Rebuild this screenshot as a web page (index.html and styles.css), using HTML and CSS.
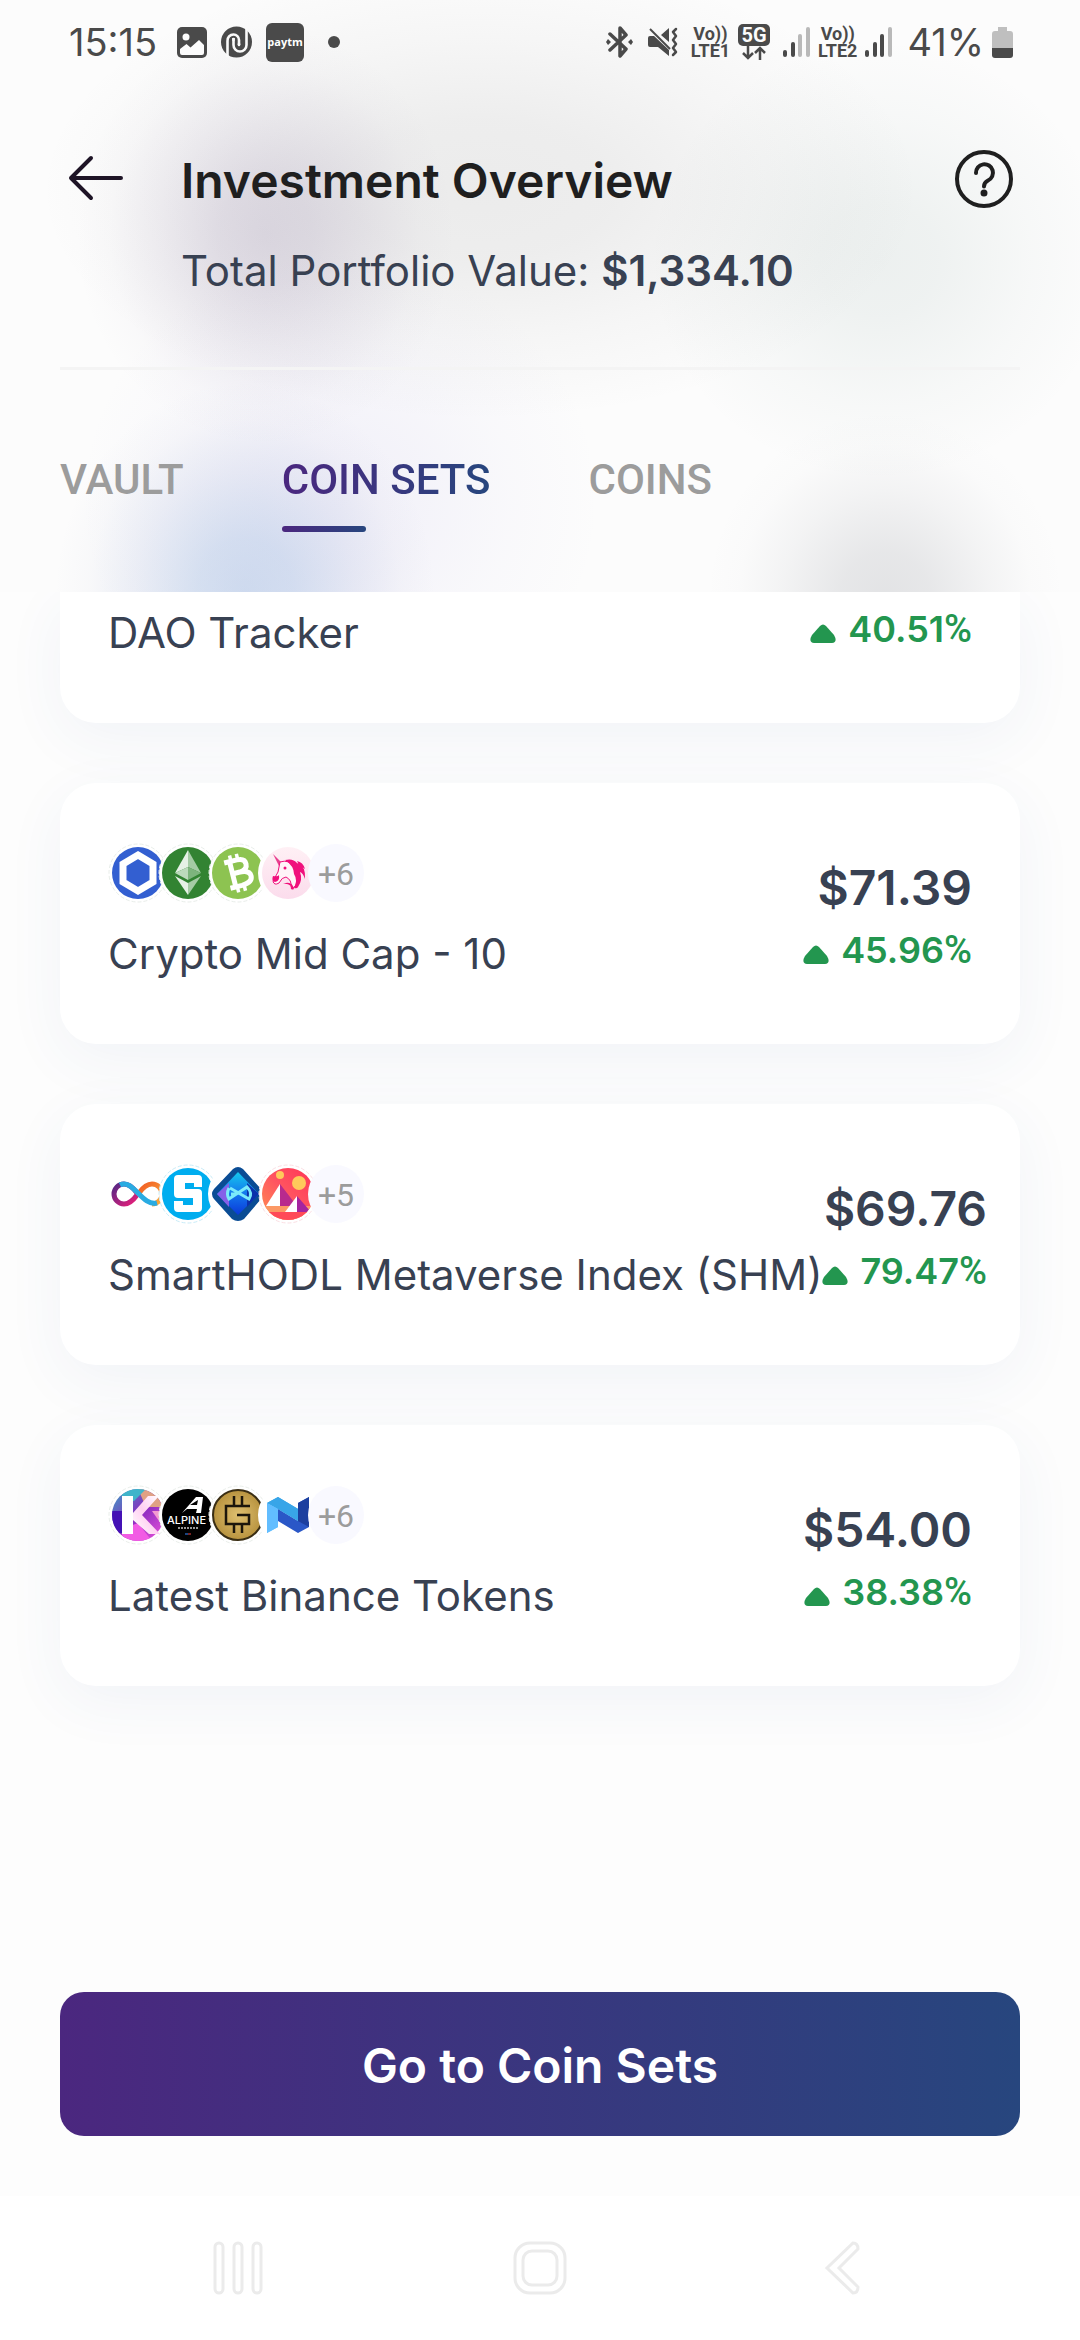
FILE: index.html
```
<!DOCTYPE html>
<html lang="en">
<head>
<meta charset="utf-8">
<meta name="viewport" content="width=device-width, initial-scale=1">
<title>Investment Overview</title>
<link rel="stylesheet" href="styles.css">
</head>
<body>
<svg class="defs" width="0" height="0" aria-hidden="true">
  <defs>
    <symbol id="signal" viewBox="0 0 27 30">
      <rect x="0" y="23" width="4" height="7" rx="2"/>
      <rect x="8" y="15" width="4" height="15" rx="2"/>
    </symbol>
    <symbol id="up" viewBox="0 0 26 19"><path d="M10 2q3-3 6 0l8 9q4 7-2 8H4q-6-1-2-8z" fill="#23964f"/></symbol>
    <linearGradient id="g-k" x1="0" y1="0" x2="1" y2="1"><stop offset="0" stop-color="#2cb4c4"/><stop offset=".5" stop-color="#8a2cc0"/><stop offset="1" stop-color="#ff5ae0"/></linearGradient>
    <linearGradient id="g-leg" x1="1" y1="0" x2="0" y2="1"><stop offset="0" stop-color="#fff"/><stop offset=".5" stop-color="#ffd0f2"/><stop offset="1" stop-color="#fff"/></linearGradient>
    <linearGradient id="g-uni" x1="0" y1="0" x2="0" y2="1"><stop offset="0" stop-color="#fff0f5"/><stop offset="1" stop-color="#fbdcec"/></linearGradient>
    <linearGradient id="g-mana" x1="0" y1="1" x2="1" y2="0"><stop offset="0" stop-color="#ff9a4d"/><stop offset=".5" stop-color="#ff5560"/><stop offset="1" stop-color="#ff2d55"/></linearGradient>
    <linearGradient id="g-axs" x1="0" y1="0" x2="0" y2="1"><stop offset="0" stop-color="#14c8ec"/><stop offset=".5" stop-color="#1478ee"/><stop offset="1" stop-color="#0a38d8"/></linearGradient>
    <linearGradient id="g-icp1" x1="0" y1="0" x2="1" y2="1"><stop offset="0" stop-color="#522785"/><stop offset="1" stop-color="#ed1e79"/></linearGradient>
    <linearGradient id="g-icp2" x1="0" y1="0" x2="1" y2="1"><stop offset="0" stop-color="#f15a24"/><stop offset="1" stop-color="#fbb03b"/></linearGradient>
    <radialGradient id="g-gold"><stop offset="0" stop-color="#dfc070"/><stop offset="1" stop-color="#b8933f"/></radialGradient>
    <clipPath id="disc"><circle cx="30" cy="30" r="26"/></clipPath>
  </defs>
</svg>

<header class="top">
  <div class="status">
    <div class="status-group status-left">
      <span class="clock">15:15</span>
      <svg width="30" height="31" viewBox="0 0 30 31"><rect width="30" height="31" rx="5" fill="#4a4a4a"/><circle cx="9" cy="10" r="3.500" fill="#fcfcfc"/><path d="M3 22l6.500-5 4 3.500L22 13l5 5v8q0 2-2 2H5q-2 0-2-2z" fill="#fcfcfc"/></svg>
      <svg width="31" height="32" viewBox="0 0 31 32"><circle cx="15.500" cy="16" r="15.500" fill="#4a4a4a"/><g fill="none" stroke="#fafafa" stroke-width="2.600"><path d="M6.500 31V15a6 6 0 0 1 6-6.500a5.500 5.500 0 0 1 5.500 5.500v5"/><path d="M12.500 12v7a6.500 6.500 0 0 0 13 0V0"/></g><path d="M12.500 14v-1M18 18v1" stroke="#fafafa" stroke-width="2.600" stroke-linecap="round"/></svg>
      <span class="paytm">paytm</span>
      <i class="dot"></i>
    </div>
    <div class="status-group status-right">
      <svg width="27" height="32" viewBox="0 0 27 32"><path d="M4 8l16 15-6 7V2l6 7L4 24" fill="none" stroke="#4a4a4a" stroke-width="3.500" stroke-linejoin="round" stroke-linecap="round"/><path d="M0 16l2-3 3 3-3 3zM22 16l3-3 2 3-2 3z" fill="#4a4a4a"/></svg>
      <svg class="mute" width="30" height="30" viewBox="0 0 30 30"><path d="M0 11q0-2 2-2h4L21 23v6L10 20H2q-2 0-2-2zM21 1v14L13 8z" fill="#4a4a4a"/><path d="M2 2l20 20" stroke="#4a4a4a" stroke-width="2"/><path d="M28 2l-3 3 3 4-3 4 3 4-3 4 3 4-3 3" fill="none" stroke="#4a4a4a" stroke-width="2.500" stroke-linecap="round" stroke-linejoin="round"/></svg>
      <span class="volte"><span>Vo))</span><span>LTE1</span></span>
      <span class="fiveg"><b>5G</b><svg width="24" height="14" viewBox="0 0 24 14"><path d="M6 0v12M1 7l5 5 5-5M18 14V2M13 7l5-5 5 5" fill="none" stroke="#4a4a4a" stroke-width="2.500"/></svg></span>
      <svg width="27" height="30" viewBox="0 0 27 30" fill="#4a4a4a"><use href="#signal"/><g fill="#b9b9b9"><rect x="15" y="7" width="4" height="23" rx="2"/><rect x="23" y="0" width="4" height="30" rx="2"/></g></svg>
      <span class="volte"><span>Vo))</span><span>LTE2</span></span>
      <svg width="27" height="30" viewBox="0 0 27 30" fill="#4a4a4a"><use href="#signal"/><rect x="15" y="7" width="4" height="23" rx="2"/><rect x="23" y="0" width="4" height="30" rx="2" fill="#b9b9b9"/></svg>
      <span class="clock percent">41%</span>
      <svg width="21" height="31" viewBox="0 0 21 31"><path d="M6 0h9v4h3q3 0 3 3v14H0V7q0-3 3-3h3z" fill="#bfbfbf"/><path d="M0 21h21v7q0 3-3 3H3q-3 0-3-3z" fill="#4a4a4a"/></svg>
    </div>
  </div>

  <div class="heading">
    <button class="icon-button back" aria-label="Back"><svg width="58" height="48" viewBox="0 0 58 48"><path d="M55 24H5M25 4L5 24l20 20" fill="none" stroke="#1e1426" stroke-width="4" stroke-linecap="round" stroke-linejoin="round"/></svg></button>
    <div class="titles">
      <h1>Investment Overview</h1>
      <p>Total Portfolio Value: <strong>$1,334.10</strong></p>
    </div>
    <button class="icon-button" aria-label="Help"><svg width="60" height="60" viewBox="0 0 60 60" fill="none" stroke="#1f1f1f" stroke-width="4" stroke-linecap="round"><circle cx="30" cy="30" r="27"/><path d="M22 24a8.500 8.500 0 1 1 12 7.500q-4 2-4 6"/><circle cx="30" cy="44" r="1.500" fill="#1f1f1f"/></svg></button>
  </div>

  <nav class="tabs">
    <a href="#vault">VAULT</a>
    <a href="#coin-sets" class="active" aria-current="page"><span>COIN SETS</span></a>
    <a href="#coins">COINS</a>
  </nav>
</header>

<main>
  <div class="list">
    <article class="card clipped">
      <h2>DAO Tracker</h2>
      <div class="value"><span class="gain"><svg width="26" height="19"><use href="#up"/></svg><span>40.51<span class="unit">%</span></span></span></div>
    </article>

    <article class="card">
      <div class="info">
        <div class="coins">
          <svg viewBox="0 0 60 60"><circle class="ring" cx="30" cy="30" r="29"/><circle cx="30" cy="30" r="26" fill="#335fd1"/><path d="M30 12L45 21V39L30 48L15 39V21z" fill="none" stroke="#fff" stroke-width="7"/></svg>
          <svg viewBox="0 0 60 60"><circle class="ring" cx="30" cy="30" r="29"/><circle cx="30" cy="30" r="26" fill="#328332"/><path d="M30 7L17 30l13-6z" fill="#e6f1e6"/><path d="M30 7l13 23-13-6z" fill="#a5cba5"/><path d="M17 30l13-6v13z" fill="#bcdabc"/><path d="M43 30l-13-6v13z" fill="#7db47d"/><path d="M17 33l13 7v12z" fill="#e6f1e6"/><path d="M43 33l-13 7v12z" fill="#a5cba5"/></svg>
          <svg viewBox="0 0 60 60"><circle class="ring" cx="30" cy="30" r="29"/><circle cx="30" cy="30" r="26" fill="#8dc351"/><g transform="rotate(-14 30 30)" fill="none" stroke="#fff" stroke-width="5"><path d="M19 17h13q8 0 8 6t-8 6.500h-8M31 29.500q11 0 11 6.500t-11 7H19M24.500 17v26"/><path d="M26 11v6M33 11v6M26 43v6M33 43v6" stroke-width="3.500"/></g></svg>
          <svg viewBox="0 0 60 60"><circle cx="30" cy="30" r="30" fill="#fff"/><circle cx="30" cy="30" r="26" fill="url(#g-uni)"/><path d="M15 11l9 9-3 3z" fill="#e8408f"/><path d="M22 19q9-3 14 5 5 9 2 18-2 4-5 2 1-7-5-10-4 0-7 6-5 3-6-2l5-9z" fill="#fff4f8" stroke="#f0107c" stroke-width="1"/><path d="M27 17q8-2 12 3 9 3 8 16-2-6-5-7 3 8-2 15-1 2-4 1 4-8 0-14 0-8-9-14zM39 18q6 1 8 8l-6-4zM15 33q5 1 6-1 1 6-4 7-4-1-2-6zM25 41q9-4 11 5-4 2-3-3-4-3-8-2z" fill="#f0107c"/><circle cx="27" cy="25" r="1.500" fill="#f0107c"/></svg>
          <span class="more">+6</span>
        </div>
        <h2>Crypto Mid Cap - 10</h2>
      </div>
      <div class="value"><span class="amount">$71.39</span><span class="gain"><svg width="26" height="19"><use href="#up"/></svg><span>45.96<span class="unit">%</span></span></span></div>
    </article>

    <article class="card">
      <div class="info">
        <div class="coins">
          <svg viewBox="0 0 60 60"><circle cx="30" cy="30" r="30" fill="#fff"/><g fill="none" stroke-width="5"><path d="M29 29C24 22 20 20 16 20A10 10 0 0 0 16 40C20 40 24 38 29 31" stroke="url(#g-icp1)"/><path d="M31 29C36 22 40 20 44 20A10 10 0 0 1 44 40" stroke="url(#g-icp2)"/><path d="M12 21C25 14 34 43 49 39" stroke="#29abe2"/></g></svg>
          <svg viewBox="0 0 60 60"><circle class="ring sky" cx="30" cy="30" r="29"/><circle cx="30" cy="30" r="26" fill="#00adef"/><path d="M20 11h20q4 0 4 4v8h-8v-4h-9v6h13q4 0 4 4v15q0 4-4 4H20q-4 0-4-4v-7h9v4h10v-7H20q-4 0-4-4V15q0-4 4-4z" fill="#fff"/></svg>
          <svg viewBox="0 0 60 60"><circle cx="30" cy="30" r="30" fill="#fff"/><path d="M25 5q5-4 10 0L53 25q5 5 0 10L36 55q-6 4-12 0L6 35q-4-5 0-10z" fill="#0a4c94"/><path d="M30 8L51 30 30 51 9 30z" fill="url(#g-axs)"/><path d="M9 30l12-11v24z" fill="#8560e8"/><path d="M51 30L39 19v24z" fill="#0b31ab"/><path d="M21 24q-3 6 0 11l18-12q6 6 2 12L22 24M23 30h5" fill="none" stroke="#7beafa" stroke-width="3"/></svg>
          <svg viewBox="0 0 60 60"><circle class="ring pink" cx="30" cy="30" r="29"/><g clip-path="url(#disc)"><rect width="60" height="60" fill="url(#g-mana)"/><path d="M0 42h60v18H0z" fill="#fc9965"/><path d="M0 48h60v12H0z" fill="#ff4a58"/><path d="M22 20v22H8z" fill="#fff"/><path d="M22 20l17 22H22z" fill="#b82a8d"/><path d="M39 32v16H27z" fill="#fff"/><path d="M39 32l14 16H39z" fill="#a424a0"/></g><circle cx="41" cy="19" r="7" fill="#ffc95b"/><circle cx="22" cy="11" r="4" fill="#ffc95b"/></svg>
          <span class="more">+5</span>
        </div>
        <h2>SmartHODL Metaverse Index (SHM)</h2>
      </div>
      <div class="value"><span class="amount">$69.76</span><span class="gain"><svg width="26" height="19"><use href="#up"/></svg><span>79.47<span class="unit">%</span></span></span></div>
    </article>

    <article class="card">
      <div class="info">
        <div class="coins">
          <svg viewBox="0 0 60 60"><circle class="ring" cx="30" cy="30" r="29"/><g clip-path="url(#disc)"><rect width="60" height="60" fill="url(#g-k)"/><path d="M0 26h17v22H0z" fill="#4411b5"/><path d="M30 4h28v18H38z" fill="#e0a184"/><path d="M14 4h24L26 16H14z" fill="#3fb4ca"/><path d="M44 26h14v20z" fill="#f49ad0"/><path d="M14 44l16-6 14 18H14z" fill="#f25be4"/></g><path d="M14 11h11v38H14z" fill="#fff"/><path d="M51 11H40L25 28v7l16 14h11L34 30z" fill="url(#g-leg)"/></svg>
          <svg viewBox="0 0 60 60"><circle class="ring" cx="30" cy="30" r="29"/><circle cx="30" cy="30" r="26"/><path d="M10 28h14L38 12h7l-2 16h-5l1-4H29l-5 4H10zM32 20h7l1-5z" fill="#fff"/><text x="9" y="39" class="alpine">ALPINE</text><path d="M20 43h20" stroke="#999" stroke-width="2" stroke-dasharray="2 1"/><path d="M27 49h3" stroke="#38f"/><path d="M30 49h3" stroke="#e44"/></svg>
          <svg viewBox="0 0 60 60"><circle class="ring" cx="30" cy="30" r="29"/><circle cx="30" cy="30" r="25" fill="url(#g-gold)" stroke="#3a2e14" stroke-width="2"/><path d="M42 21H18v18h23V30H29M26 21V11M34 21V11M26 39v9M34 39v9" fill="none" stroke="#1c160b" stroke-width="2.500"/></svg>
          <svg viewBox="0 0 60 60"><circle cx="30" cy="30" r="30" fill="#fff"/><path d="M9 18l11-6 22 13v12L20 24z" fill="#38a5e8"/><path d="M9 18l11 6v18L9 48z" fill="#62bdff"/><path d="M20 24l20 12V18l11-6v30l-11 6-20-12z" fill="#2a57c7"/><path d="M9 18l11-6 20 12v12L20 24z" fill="#38a5e8"/><path d="M9 18l11 6v18l-11 6z" fill="#62bdff"/><path d="M40 18l11-6v30l-11-6z" fill="#1c3f9f"/></svg>
          <span class="more">+6</span>
        </div>
        <h2>Latest Binance Tokens</h2>
      </div>
      <div class="value"><span class="amount">$54.00</span><span class="gain"><svg width="26" height="19"><use href="#up"/></svg><span>38.38<span class="unit">%</span></span></span></div>
    </article>
  </div>
  <button class="cta">Go to Coin Sets</button>
</main>

<footer class="system-nav">
  <button class="icon-button" aria-label="Recent apps"><svg width="56" height="56" viewBox="0 0 56 56"><rect x="5" y="3" width="8" height="50" rx="4"/><rect x="24" y="3" width="8" height="50" rx="4"/><rect x="43" y="3" width="8" height="50" rx="4"/></svg></button>
  <button class="icon-button" aria-label="Home"><svg width="56" height="56" viewBox="0 0 56 56"><rect x="3" y="3" width="50" height="50" rx="15"/><rect x="11" y="11" width="34" height="34" rx="9"/></svg></button>
  <button class="icon-button" aria-label="Back"><svg width="56" height="56" viewBox="0 0 56 56"><path d="M39 3q5 0 5 6L25 28l19 19q0 6-5 6L13 28z"/></svg></button>
</footer>
</body>
</html>
```
FILE: styles.css
```
* { box-sizing: border-box; }

body {
  margin: 0;
  min-height: 100vh;
  display: flex;
  flex-direction: column;
  background: #fdfdfd;
  color: #384152;
  font-family: Inter, "Liberation Sans", sans-serif;
}

h1, h2, p { margin: 0; }
svg { display: block; flex: none; }
.defs { position: absolute; }

.top {
  padding: 0 60px 60px;
  background:
    radial-gradient(ellipse 190px 210px at 265px 235px, rgba(112, 92, 138, .2), rgba(112, 92, 138, .17) 25%, rgba(112, 92, 138, .08) 58%, rgba(112, 92, 138, .02) 82%, transparent),
    radial-gradient(ellipse 440px 230px at 480px 190px, rgba(90, 90, 90, .1), rgba(90, 90, 90, .09) 30%, rgba(90, 90, 90, .04) 65%, transparent),
    radial-gradient(ellipse 230px 220px at 880px 260px, rgba(80, 120, 110, .09), rgba(80, 120, 110, .08) 25%, rgba(80, 120, 110, .03) 65%, transparent),
    radial-gradient(ellipse 190px 210px at 245px 592px, rgba(95, 140, 205, .27), rgba(95, 140, 205, .23) 25%, rgba(105, 130, 195, .11) 58%, rgba(120, 130, 180, .03) 82%, transparent),
    radial-gradient(ellipse 260px 250px at 340px 500px, rgba(150, 140, 220, .1), rgba(150, 140, 220, .08) 30%, rgba(150, 140, 220, .03) 65%, transparent),
    radial-gradient(ellipse 180px 190px at 885px 600px, rgba(100, 104, 115, .17), rgba(100, 104, 115, .14) 25%, rgba(100, 104, 115, .06) 58%, rgba(100, 104, 115, .01) 82%, transparent),
    #fcfcfc;
}

.status { display: flex; justify-content: space-between; height: 84px; color: #4a4a4a; }
.status-group { display: flex; align-items: center; }
.status-left { padding-left: 9px; }
.status-left svg { margin-right: 14px; }
.clock { font-size: 38px; font-weight: 400; line-height: 48px; margin-right: 20px; }
.percent { margin: 0 8px 0 15px; }
.paytm { width: 38px; height: 39px; border-radius: 6px; background: #4a4a4a; color: #fff; font: 700 11px/38px "Open Sans", sans-serif; text-align: center; }
.dot { width: 12px; height: 12px; border-radius: 50%; background: #4a4a4a; margin-left: 24px; }
.status-right { padding-right: 7px; }
.mute { margin: 0 13px 0 15px; }
.volte { display: flex; flex-direction: column; align-items: center; margin-right: 8px; font: 700 18px/17px Roboto, sans-serif; }
.fiveg { display: flex; flex-direction: column; align-items: center; margin-right: 13px; }
.fiveg b { width: 32px; height: 22px; border-radius: 5px; background: #4a4a4a; color: #fcfcfc; font: 700 20px/22px Roboto, sans-serif; text-align: center; }
.fiveg + svg { margin-right: 8px; }

.heading { display: flex; align-items: flex-start; height: 286px; padding: 65px 6px 0; border-bottom: 3px solid #f4f4f4; }
.icon-button { border: 0; padding: 0; background: none; }
.back { padding: 5px 0; width: 115px; }
.titles { flex: 1; }
h1 { color: #1f1f1f; font-size: 48px; font-weight: 600; line-height: 64px; white-space: nowrap; }
.titles p { margin-top: 30px; font-size: 42px; font-weight: 400; line-height: 56px; white-space: nowrap; }
strong { font-weight: 600; }

.tabs { display: flex; gap: 98px; padding-top: 85px; }
.tabs a { color: #9c9c9c; font: 500 42px/50px Roboto, sans-serif; text-decoration: none; }
.tabs .active::after { content: ""; display: block; width: 84px; height: 6px; margin-top: 21px; border-radius: 3px; background: linear-gradient(90deg, #4b277f, #27467e); }
.tabs .active span { background: linear-gradient(90deg, #4b277f, #27467e); background-clip: text; color: transparent; }

main { flex: 1; display: flex; flex-direction: column; justify-content: space-between; gap: 60px; padding: 0 60px 60px; overflow: hidden; }
.list { display: flex; flex-direction: column; gap: 60px; }
.card { display: flex; justify-content: space-between; align-items: flex-start; padding: 60px 48px; border-radius: 36px; background: #fff; box-shadow: 0 16px 60px rgba(50, 80, 150, .06); }
.clipped { padding: 13px 48px 62px; border-radius: 0 0 36px 36px; }
.clipped .value { padding: 2px 0 0; }
.card h2 { font-size: 42px; font-weight: 400; line-height: 56px; white-space: nowrap; }
.info { display: grid; gap: 23px; padding-bottom: 2px; }
.coins { display: flex; align-items: center; }
.coins svg { width: 60px; height: 60px; margin-right: -10px; }
.ring { fill: #fff; stroke: #e9eeea; stroke-width: 1; stroke-dasharray: 4 2; }
.sky { stroke: #c9ecf8; }
.pink { stroke: #fbdfe4; }
.alpine { fill: #fff; font: 500 11px Inter, sans-serif; }
.more { width: 56px; height: 58px; border-radius: 50%; background: #f9f9ff; color: #9c9c9c; font: 400 32px/60px Roboto, sans-serif; text-align: center; }
.value { display: flex; flex-direction: column; align-items: flex-end; gap: 10px; padding-top: 15px; }
.amount { font-size: 48px; font-weight: 600; line-height: 60px; }
.gain { display: flex; align-items: center; gap: 12px; color: #23964f; font-size: 36px; font-weight: 600; line-height: 44px; }
.gain svg { margin-top: 8px; }
.unit { font-family: Roboto, sans-serif; font-size: 38px; font-weight: 500; line-height: 1; }

.cta { width: 100%; height: 144px; border: 0; border-radius: 24px; padding-top: 4px; background: linear-gradient(90deg, #4b277f, #27467e); color: #fff; font: 600 48px/60px Inter, sans-serif; }

.system-nav { display: grid; grid-template-columns: 1fr 1fr 1fr; height: 144px; padding: 0 87px; background: #fff; }
.system-nav .icon-button { display: grid; place-items: center; }
.system-nav svg { fill: none; stroke: #ebebeb; stroke-width: 3; }
```
